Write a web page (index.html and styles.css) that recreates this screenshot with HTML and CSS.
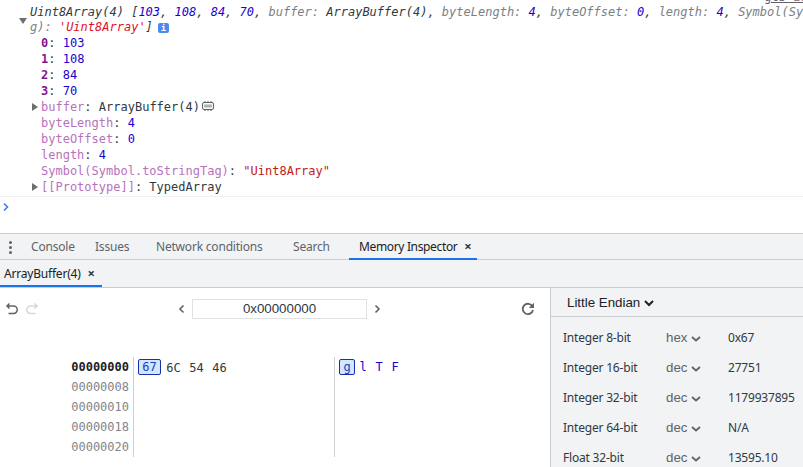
FILE: index.html
```html
<!DOCTYPE html>
<html>
<head>
    <title>Memory Inspector</title>
    <link rel="stylesheet" href="styles.css">
</head>
<body>
    <div class="console">
        <a class="source-link">gtb-ar</a>
        <div class="summary">
            <span class="arrow-down"></span>
            <div class="summary-text"><span class="dark">Uint8Array(4) [</span><span class="num">103</span><span class="dark">, </span><span class="num">108</span><span class="dark">, </span><span class="num">84</span><span class="dark">, </span><span class="num">70</span><span class="dark">, </span><span class="grey">buffer: </span><span class="dark">ArrayBuffer(4), </span><span class="grey">byteLength: </span><span class="num">4</span><span class="dark">, </span><span class="grey">byteOffset: </span><span class="num">0</span><span class="dark">, </span><span class="grey">length: </span><span class="num">4</span><span class="dark">, </span><span class="grey">Symbol(Symbol.toStringTag): </span><span class="str">'Uint8Array'</span><span class="dark">]</span><span class="info">i</span></div>
        </div>
        <div class="props">
            <div class="prop"><b class="idx">0</b>: <span class="val">103</span></div>
            <div class="prop"><b class="idx">1</b>: <span class="val">108</span></div>
            <div class="prop"><b class="idx">2</b>: <span class="val">84</span></div>
            <div class="prop"><b class="idx">3</b>: <span class="val">70</span></div>
            <div class="prop"><span class="arrow-right"></span><span class="key">buffer</span>: ArrayBuffer(4)<svg class="chip" width="14" height="10" viewBox="0 0 14 10"><rect x="1.500" y="1.500" width="11" height="7" rx="1.500" fill="none" stroke="#5f6368"/><path d="M4 3.500v3M6 3.500v3M8 3.500v3M10 3.500v3M4 0v1M7 0v1M10 0v1M4 9v1M7 9v1M10 9v1" stroke="#5f6368"/></svg></div>
            <div class="prop"><span class="key">byteLength</span>: <span class="val">4</span></div>
            <div class="prop"><span class="key">byteOffset</span>: <span class="val">0</span></div>
            <div class="prop"><span class="key">length</span>: <span class="val">4</span></div>
            <div class="prop"><span class="key">Symbol(Symbol.toStringTag)</span>: <span class="str">"Uint8Array"</span></div>
            <div class="prop"><span class="arrow-right"></span><span class="key">[[Prototype]]</span>: TypedArray</div>
        </div>
        <div class="prompt">
            <svg width="8" height="10" viewBox="0 0 8 10"><path d="M2 1.500 5.500 5 2 8.500" fill="none" stroke="#3b7de8" stroke-width="1.600"/></svg>
        </div>
    </div>

    <div class="drawer-tabs">
        <span class="dots"><i></i><i></i><i></i></span>
        <span class="tab tab-console">Console</span>
        <span class="tab tab-issues">Issues</span>
        <span class="tab tab-network">Network conditions</span>
        <span class="tab tab-search">Search</span>
        <span class="tab tab-memory">Memory Inspector <span class="close">×</span></span>
    </div>
    <div class="buffer-tabs">
        <span class="buffer-tab">ArrayBuffer(4) <span class="close">×</span></span>
    </div>

    <div class="inspector">
        <div class="viewer">
            <div class="toolbar">
                <div class="history">
                    <svg width="14" height="14" viewBox="0 0 14 14"><path d="M4.500 1.500 2 4l2.500 2.500M2 4h6.500a3.200 3.200 0 0 1 0 7.500H3.500" fill="none" stroke="#5f6368" stroke-width="1.500"/></svg>
                    <svg width="14" height="14" viewBox="0 0 14 14"><path d="M9.500 1.500 12 4 9.500 6.500M12 4H5.500a3.200 3.200 0 0 0 0 7.500H10.500" fill="none" stroke="#d5d7da" stroke-width="1.500"/></svg>
                </div>
                <div class="address">
                    <svg width="8" height="10" viewBox="0 0 8 10"><path d="M5.500 1.500 2 5l3.500 3.500" fill="none" stroke="#5f6368" stroke-width="1.600"/></svg>
                    <span class="address-box">0x00000000</span>
                    <svg width="8" height="10" viewBox="0 0 8 10"><path d="M2.500 1.500 6 5 2.500 8.500" fill="none" stroke="#5f6368" stroke-width="1.600"/></svg>
                </div>
                <svg class="refresh" width="14" height="14" viewBox="0 0 14 14"><path d="M11.500 4.500A5.200 5.200 0 1 0 12 8" fill="none" stroke="#5f6368" stroke-width="1.800"/><path d="M13 .8V6H7.800z" fill="#5f6368"/></svg>
            </div>
            <div class="memory">
                <div class="offsets">
                    <div class="offset current">00000000</div>
                    <div class="offset">00000008</div>
                    <div class="offset">00000010</div>
                    <div class="offset">00000018</div>
                    <div class="offset">00000020</div>
                </div>
                <div class="bytes">
                    <span class="byte selected">67</span>
                    <span class="byte">6C</span>
                    <span class="byte">54</span>
                    <span class="byte">46</span>
                </div>
                <div class="chars">
                    <span class="char selected">g</span>
                    <span class="char">l</span>
                    <span class="char">T</span>
                    <span class="char">F</span>
                </div>
            </div>
        </div>
        <div class="values">
            <div class="endian">Little Endian <svg width="10" height="7" viewBox="0 0 10 7"><path d="M1 1l4 4 4-4" fill="none" stroke="#202124" stroke-width="2"/></svg></div>
            <div class="value-row"><span class="v-name">Integer 8-bit</span><span class="v-mode">hex <svg width="10" height="6" viewBox="0 0 10 6"><path d="M1 1l4 3.500L9 1" fill="none" stroke="#5f6368" stroke-width="1.800"/></svg></span><span class="v-val">0x67</span></div>
            <div class="value-row"><span class="v-name">Integer 16-bit</span><span class="v-mode">dec <svg width="10" height="6" viewBox="0 0 10 6"><path d="M1 1l4 3.500L9 1" fill="none" stroke="#5f6368" stroke-width="1.800"/></svg></span><span class="v-val">27751</span></div>
            <div class="value-row"><span class="v-name">Integer 32-bit</span><span class="v-mode">dec <svg width="10" height="6" viewBox="0 0 10 6"><path d="M1 1l4 3.500L9 1" fill="none" stroke="#5f6368" stroke-width="1.800"/></svg></span><span class="v-val">1179937895</span></div>
            <div class="value-row"><span class="v-name">Integer 64-bit</span><span class="v-mode">dec <svg width="10" height="6" viewBox="0 0 10 6"><path d="M1 1l4 3.500L9 1" fill="none" stroke="#5f6368" stroke-width="1.800"/></svg></span><span class="v-val">N/A</span></div>
            <div class="value-row"><span class="v-name">Float 32-bit</span><span class="v-mode">dec <svg width="10" height="6" viewBox="0 0 10 6"><path d="M1 1l4 3.500L9 1" fill="none" stroke="#5f6368" stroke-width="1.800"/></svg></span><span class="v-val">13595.10</span></div>
        </div>
    </div>
</body>
</html>
```

FILE: styles.css
```css
:root {
    --mono: 'DejaVu Sans Mono', monospace;
    --ui: 'Noto Sans', 'Open Sans', sans-serif;
    --panel: #f1f3f4;
    --line: #cbcdd1;
    --blue: #1a73e8;
}

html, body {
    height: 100%;
}

body {
    margin: 0;
    width: 803px;
    height: 467px;
    overflow: hidden;
    background: #fff;
    color: #202124;
    font-family: var(--ui);
    font-size: 12px;
    letter-spacing: -0.2px;
    display: flex;
    flex-direction: column;
}

/* console output */
.console {
    height: 233px;
    position: relative;
    font-family: var(--mono);
    font-size: 12px;
    letter-spacing: 0;
    line-height: 16px;
    overflow: hidden;
    flex: none;
}

.source-link {
    position: absolute;
    left: 764px;
    top: -11px;
    color: #5f6368;
    text-decoration: underline;
    white-space: nowrap;
}

.summary {
    display: flex;
    padding: 5px 0 0 19px;
    height: 30px;
}

.arrow-down {
    width: 0;
    height: 0;
    margin: 13px 4px 0 0;
    border-left: 4px solid transparent;
    border-right: 4px solid transparent;
    border-top: 6px solid #6e6e6e;
}

.summary-text {
    width: 882px;
    flex: none;
    margin-left: -1px;
    line-height: 15px;
    font-style: italic;
    word-break: break-all;
}

.dark { color: #303942; }
.grey { color: #7b7f85; }
.num { color: #1c00cf; }
.str { color: #c41a16; }

.summary-text .str { color: #e0102a; }

.info {
    display: inline-block;
    width: 11px;
    height: 10px;
    margin-left: 5px;
    background: #4a8af0;
    border-radius: 2px;
    color: #fff;
    font: bold 9px/10px var(--mono);
    text-align: center;
}

.prop {
    height: 16px;
    position: relative;
    margin-left: 41px;
    color: #303942;
    white-space: nowrap;
}

.idx { color: #881391; }
.val { color: #1c00cf; }
.key { color: #b871bd; }
.chip { margin-left: 1px; vertical-align: 0; }

.arrow-right {
    position: absolute;
    left: -9px;
    top: 4px;
    border-top: 4px solid transparent;
    border-bottom: 4px solid transparent;
    border-left: 6px solid #6e6e6e;
}

.prompt {
    position: absolute;
    left: 0;
    right: 0;
    top: 196px;
    border-top: 1px solid #f0f0f0;
    padding: 5px 0 0 2px;
    line-height: 10px;
}

/* drawer tabs */
.drawer-tabs {
    height: 27px;
    flex: none;
    box-sizing: border-box;
    background: var(--panel);
    border-top: 1px solid var(--line);
    border-bottom: 1px solid var(--line);
    display: flex;
    align-items: stretch;
    color: #5f6368;
    line-height: 25px;
}

.dots {
    width: 31px;
    padding: 7px 0 0 9px;
    box-sizing: border-box;
    display: flex;
    flex-direction: column;
    gap: 2px;
}

.dots i {
    width: 3px;
    height: 3px;
    border-radius: 50%;
    background: #5f6368;
}

.tab { display: block; }
.tab-console { width: 64px; }
.tab-issues { width: 61px; }
.tab-network { width: 137px; }
.tab-search { width: 56px; }

.tab-memory {
    width: 128px;
    box-sizing: border-box;
    padding-left: 10px;
    color: #202124;
    height: 26px;
    letter-spacing: -0.35px;
    border-bottom: 2px solid var(--blue);
}

.close {
    font-size: 13px;
    font-weight: bold;
    line-height: 10px;
    color: #303942;
    margin-left: 4px;
}

.buffer-tabs {
    height: 28px;
    flex: none;
    box-sizing: border-box;
    background: var(--panel);
    border-bottom: 1px solid var(--line);
    line-height: 27px;
}

.buffer-tab {
    display: inline-block;
    width: 102px;
    height: 27px;
    box-sizing: border-box;
    padding-left: 4px;
    border-bottom: 2px solid var(--blue);
}

/* inspector */
.inspector {
    flex: 1;
    display: flex;
    min-height: 0;
}

.viewer {
    width: 551px;
    flex: none;
    box-sizing: border-box;
    border-right: 1px solid var(--line);
}

.toolbar {
    height: 42px;
    display: flex;
    align-items: center;
    position: relative;
    padding-left: 5px;
}

.history {
    display: flex;
    gap: 6px;
    width: 173px;
}

.address {
    display: flex;
    align-items: center;
    gap: 6px;
}

.address-box {
    width: 173px;
    height: 18px;
    border: 1px solid #dfe1e5;
    text-align: center;
    font: 13.300px/18px 'Liberation Sans', sans-serif;
    letter-spacing: 0;
    color: #303942;
}

.refresh {
    position: absolute;
    right: 15px;
    top: 14px;
}

.memory {
    display: flex;
    padding-top: 27px;
    font-family: var(--mono);
    font-size: 12px;
    letter-spacing: 0;
    height: 100px;
}

.offsets {
    width: 134px;
    box-sizing: border-box;
    padding-right: 4px;
    border-right: 1px solid #cfcfcf;
    text-align: right;
    color: #80868b;
    line-height: 20px;
    height: 100px;
}

.offset.current {
    color: #202124;
    font-weight: bold;
}

.bytes {
    width: 201px;
    box-sizing: border-box;
    padding: 2px 0 0 4px;
    border-right: 1px solid #cfcfcf;
    display: flex;
    gap: 6px;
    align-items: flex-start;
    line-height: 16px;
    color: #303942;
}

.byte, .char {
    box-sizing: border-box;
    height: 16px;
    text-align: center;
    border: 1px solid transparent;
}

.byte { width: 17px; }
.byte.selected { width: 23px; margin-right: -2px; }

.chars {
    padding: 2px 0 0 4px;
    display: flex;
    gap: 2px;
    align-items: flex-start;
    line-height: 14px;
    color: #1c00cf;
}

.char { width: 14px; }
.char.selected { width: 16px; margin-right: -1px; }

.selected {
    background: #cfe8fc;
    border: 1px solid #1a2fb0;
    border-radius: 2px;
    color: #1c3bc8;
    line-height: 14px;
}

.values {
    flex: 1;
    background: var(--panel);
    min-width: 0;
    white-space: nowrap;
}

.endian {
    height: 29px;
    border-bottom: 1px solid var(--line);
    box-sizing: border-box;
    padding-left: 16px;
    font: 13.300px/29px 'Liberation Sans', sans-serif;
    letter-spacing: 0;
    color: #202124;
}

.value-row {
    display: flex;
    height: 30px;
    line-height: 30px;
    padding-left: 12px;
    color: #303942;
}

.endian + .value-row { margin-top: 6px; }

.v-name { width: 103px; }

.v-mode {
    width: 62px;
    color: #5f6368;
    font: 13.300px/30px 'Liberation Sans', sans-serif;
    letter-spacing: 0;
}
```
